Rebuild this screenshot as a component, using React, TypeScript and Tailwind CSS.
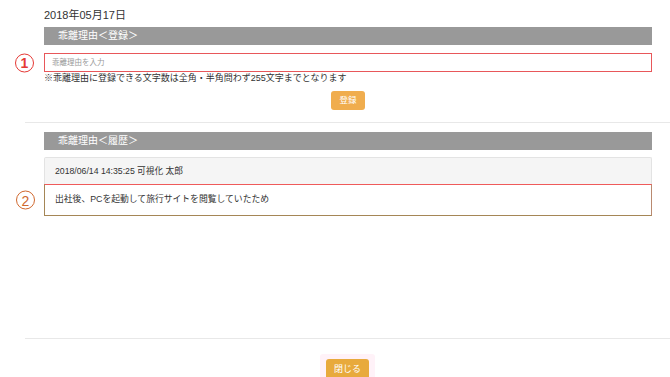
const font = { fontFamily: '"Liberation Sans", "Noto Sans CJK JP", sans-serif' };

const Marker = ({ n, color }: { n: string; color: string }) => (
  <span
    className={`absolute left-[-29px] top-1/2 -translate-y-1/2 flex h-[19px] w-[19px] items-center justify-center rounded-full border-[1.5px] text-[14px] leading-none ${color}`}
  >
    {n}
  </span>
);

export default function App() {
  return (
    <div
      className="relative h-[377px] w-[670px] overflow-hidden bg-white text-[#333]"
      style={font}
    >
      <div className="pl-[25px]">
        {/* 登録 */}
        <section className="border-b border-[#e8e8e8] pb-[12px] pl-[19px] pr-[18px] pt-[7px]">
          <div className="text-[11px] leading-[16px]">2018年05月17日</div>
          <div className="mt-[4px] h-[18px] bg-[#999999] pl-[14px] text-[10px] leading-[18px] text-white">
            乖離理由＜登録＞
          </div>
          <div className="relative mt-[8px]">
            <Marker n="1" color="border-[#e53935] font-bold text-[#e53935]" />
            <input
              className="block h-[19px] w-full border border-[#e8575a] bg-white px-[7px] text-[7.5px] outline-none placeholder:text-[#999]"
              placeholder="乖離理由を入力"
            />
          </div>
          <p className="text-[9px] leading-[12px]">
            ※乖離理由に登録できる文字数は全角・半角問わず255文字までとなります
          </p>
          <div className="mt-[7px] flex justify-center">
            <button className="h-[19px] rounded-[3px] bg-[#f0ad4e] px-[8px] text-[8.5px] text-white">
              登録
            </button>
          </div>
        </section>

        {/* 履歴 */}
        <section className="h-[216px] border-b border-[#e8e8e8] pl-[19px] pr-[18px] pt-[9px]">
          <div className="h-[18px] bg-[#999999] pl-[14px] text-[10px] leading-[18px] text-white">
            乖離理由＜履歴＞
          </div>
          <div className="mt-[7px] h-[27px] rounded-t-[2px] border border-b-0 border-[#e3e3e3] bg-[#f5f5f5] pl-[10px] text-[8.7px] leading-[26px]">
            2018/06/14 14:35:25 可視化 太郎
          </div>
          <div className="relative h-[32px] border-[1.5px] border-b-[#a58656] border-l-[#a58656] border-r-[#b98a70] border-t-[#ef5a5a] pl-[10px] text-[8.8px] leading-[29px]">
            <Marker n="2" color="border-[#d0682e] text-[#d0682e]" />
            出社後、PCを起動して旅行サイトを閲覧していたため
          </div>
        </section>

        <div className="flex justify-center pt-[15px]">
          <div className="rounded-[3px] bg-[#fff2f8] px-[6px] pt-[1px]">
            <button className="h-[22px] rounded-[3px] bg-[#e8aa3c] px-[8px] text-[9px] text-white">
              閉じる
            </button>
          </div>
        </div>
      </div>
    </div>
  );
}
